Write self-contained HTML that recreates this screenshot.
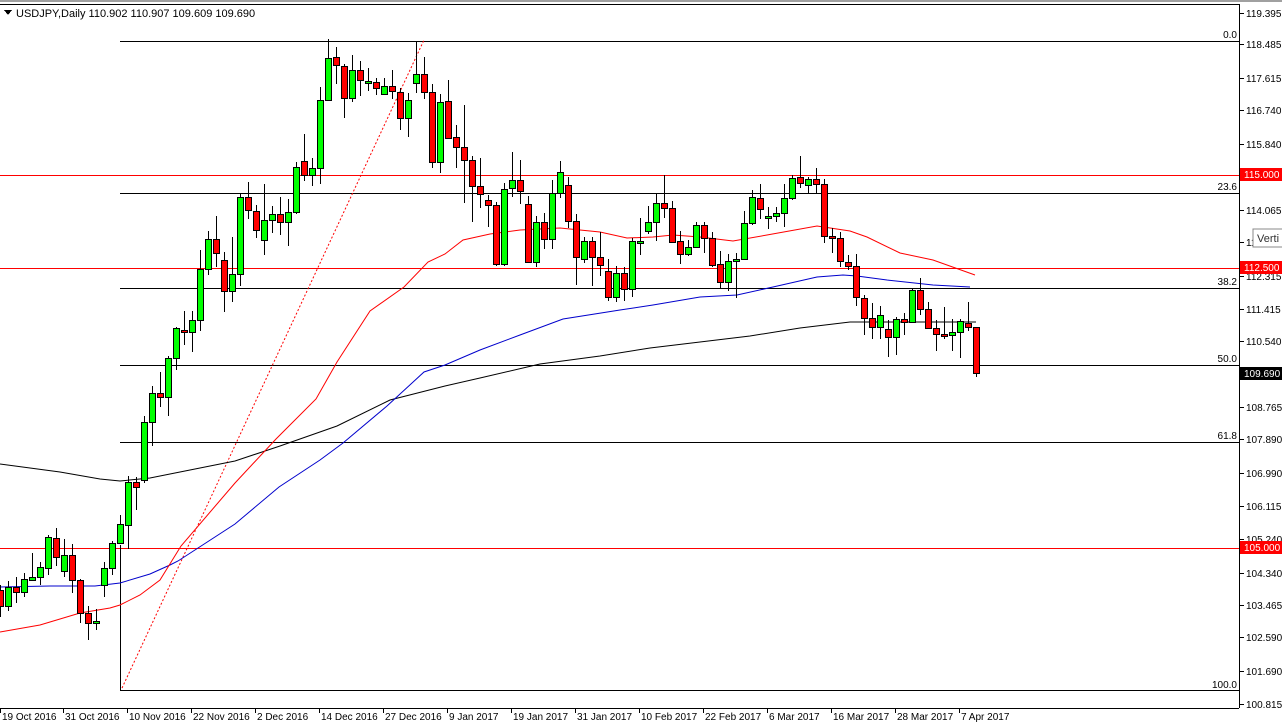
<!DOCTYPE html>
<html><head><meta charset="utf-8"><style>
html,body{margin:0;padding:0;background:#fff;width:1282px;height:728px;overflow:hidden;font-family:"Liberation Sans",sans-serif;}
svg{position:absolute;left:0;top:0}
text{font-family:"Liberation Sans",sans-serif;font-size:10px;fill:#000}
</style></head><body>
<svg id="s" width="1282" height="728" viewBox="0 0 1282 728" shape-rendering="crispEdges">
<rect x="0" y="0" width="1282" height="2" fill="#a0a0a0"/>
<line x1="0" y1="4.5" x2="1239" y2="4.5" stroke="#000"/>
<line x1="1239.5" y1="4" x2="1239.5" y2="708" stroke="#000"/>
<line x1="0" y1="708.5" x2="1239" y2="708.5" stroke="#000"/>
<!-- red horizontals -->
<line x1="0" y1="175.5" x2="1239" y2="175.5" stroke="#f00"/>
<line x1="0" y1="268.5" x2="1239" y2="268.5" stroke="#f00"/>
<line x1="0" y1="548.5" x2="1239" y2="548.5" stroke="#f00"/>
<!-- fib lines -->
<g stroke="#000">
<line x1="120" y1="41.5" x2="1239" y2="41.5"/>
<line x1="120" y1="193.5" x2="1239" y2="193.5"/>
<line x1="120" y1="288.5" x2="1239" y2="288.5"/>
<line x1="120" y1="365.5" x2="1239" y2="365.5"/>
<line x1="120" y1="442.5" x2="1239" y2="442.5"/>
<line x1="120" y1="690.5" x2="1239" y2="690.5"/>
<line x1="120.5" y1="545" x2="120.5" y2="690"/>
</g>
<g text-anchor="end">
<text x="1237" y="38">0.0</text><text x="1237" y="190">23.6</text><text x="1237" y="285">38.2</text>
<text x="1237" y="362">50.0</text><text x="1237" y="439">61.8</text><text x="1237" y="688">100.0</text>
</g>
<line x1="122" y1="688" x2="424" y2="40" stroke="#f00" stroke-dasharray="2,2" shape-rendering="auto"/>
<g fill="none" shape-rendering="auto" stroke-width="1">
<polyline stroke="#000" points="0,464 60,472 100,479 120,481 150,478 190,470 235,461 280,446 337,426 390,400 445,386 480,378 540,364 600,356 650,348 700,342 750,336 800,328 850,322 976,322"/>
<polyline stroke="#00c" points="0,587 50,586 95,586 120,583 150,574 170,565 178,561 235,524 279,487 320,460 343,443 387,406 424,372 445,365 480,350 520,335 563,319 620,310 653,305 700,297 737,295 773,287 817,277 843,275 857,276 887,280 933,285 970,287"/>
<polyline stroke="#f00" points="0,632 40,625 80,613 110,608 120,605 140,595 160,580 181,546 235,483 276,439 316,399 337,362 370,311 404,287 428,262 445,254 463,240 490,234 520,230 560,228 600,232 627,238 653,237 673,235 700,237 733,241 767,235 817,226 850,231 867,237 900,253 933,260 975,275"/>
</g>
<g id="c"></g>
<!-- title -->
<path d="M4 10 L12 10 L8 15 Z" fill="#000"/>
<text x="16" y="17" style="font-size:11px">USDJPY,Daily  110.902 110.907 109.609 109.690</text>
<!-- right axis -->
<g id="ax"></g>
<rect x="1240" y="168" width="42" height="13" fill="#f00"/><text x="1244" y="178" style="fill:#fff">115.000</text>
<rect x="1240" y="261" width="42" height="13" fill="#f00"/><text x="1244" y="271" style="fill:#fff">112.500</text>
<rect x="1240" y="367" width="42" height="13" fill="#000"/><text x="1244" y="377" style="fill:#fff">109.690</text>
<rect x="1240" y="541" width="42" height="13" fill="#f00"/><text x="1244" y="551" style="fill:#fff">105.000</text>
<rect x="1253" y="229" width="32" height="18" fill="#fff" stroke="#888"/><text x="1257" y="242" style="font-size:11px;fill:#333">Verti</text>
<g id="bx"></g>
</svg>
<script>
var d=[
[0,590,606,585,617],[1,587,606,581,611],[0,587,592,577,603],[1,579,592,573,597],[1,577,580,553,581],[1,567,577,562,585],[1,537,568,535,575],[0,538,557,528,566],[1,555,571,539,577],[0,555,580,544,593],
[0,580,613,579,623],[0,613,623,606,640],[1,621,623,609,630],[1,568,585,562,597],[1,543,568,541,575],[1,524,543,515,543],[1,482,525,476,549],[0,482,487,477,510],[1,422,480,416,483],[1,393,422,386,446],
[0,393,397,372,407],[1,358,397,356,416],[1,328,358,327,370],[0,330,332,311,345],[1,320,332,311,352],[1,269,320,250,331],[1,239,269,231,275],[0,239,253,216,267],[0,260,291,252,312],[1,274,291,237,302],
[1,197,274,193,286],[0,197,210,182,219],[0,211,230,205,238],[1,220,240,184,255],[1,214,220,206,233],[0,214,222,197,235],[1,212,222,199,246],[1,167,212,162,214],[0,161,175,134,181],[1,168,175,158,186],
[1,100,168,87,184],[1,58,100,39,101],[0,57,65,47,84],[0,66,98,64,118],[1,70,98,55,102],[0,70,80,61,96],[1,81,82,68,91],[0,82,88,78,95],[1,86,94,78,95],[0,86,91,70,99],
[0,92,118,88,130],[1,100,118,93,137],[1,74,83,41,93],[0,74,92,57,99],[0,92,162,84,168],[1,102,162,94,173],[0,101,138,80,139],[0,137,147,125,168],[0,147,160,105,203],[0,160,186,156,222],
[0,186,194,158,208],[0,200,205,195,227],[0,205,264,202,266],[1,189,264,183,266],[1,180,188,152,197],[0,180,191,160,204],[0,204,262,196,263],[1,222,262,216,267],[0,222,239,213,249],[1,193,239,180,249],
[1,172,193,161,198],[0,185,221,177,228],[0,221,257,214,285],[1,241,259,237,263],[0,241,257,237,286],[0,257,265,232,276],[0,271,297,259,301],[1,273,297,266,302],[0,273,289,267,301],[1,241,289,238,297],
[1,241,242,218,255],[1,222,231,206,234],[1,203,222,193,241],[0,203,208,175,218],[0,208,242,201,243],[0,241,254,231,264],[1,247,254,240,256],[1,225,247,222,248],[0,225,238,222,253],[0,238,265,232,267],
[0,264,282,251,289],[1,261,282,254,291],[1,259,261,253,298],[1,223,259,211,259],[1,197,223,190,225],[0,198,209,184,219],[1,216,218,207,229],[1,213,216,207,222],[1,198,213,184,227],[1,178,198,175,200],
[0,177,183,156,188],[1,179,185,177,194],[0,179,184,168,193],[0,184,236,179,243],[0,236,238,228,253],[0,238,261,232,267],[0,262,266,255,270],[0,266,297,254,306],[0,298,318,295,335],[0,318,327,303,339],
[1,315,327,306,339],[0,329,337,320,357],[1,319,337,317,355],[0,319,322,313,335],[1,290,322,288,323],[0,290,309,278,315],[0,309,328,302,328],[0,328,334,320,351],[0,334,336,307,339],[1,332,335,319,351],
[1,321,332,319,358],[0,323,327,302,331],[0,327,373,327,377]];
var h='';
d.forEach(function(c,i){var x=8*i;
h+='<line x1="'+(x+0.5)+'" y1="'+c[3]+'" x2="'+(x+0.5)+'" y2="'+c[4]+'" stroke="#000"/>';
var t=c[1],b=c[2];if(b-t<2){b=t+2;}
h+='<rect x="'+(x-2.5)+'" y="'+(t+0.5)+'" width="6" height="'+(b-t)+'" fill="'+(c[0]?'#00ff00':'#ff0000')+'" stroke="#000"/>';});
document.getElementById('c').innerHTML=h;
var L=[[119.395,13],[118.485,44],[117.615,78],[116.740,110],[115.840,144],[114.065,210],[113.190,242],[112.315,276],[111.415,309],[110.540,341],[108.765,407],[107.890,439],[106.990,473],[106.115,506],[105.240,539],[104.340,573],[103.465,605],[102.590,637],[101.690,671],[100.815,704]];
var a='';L.forEach(function(l){a+='<line x1="1240" y1="'+(l[1]+0.5)+'" x2="1244" y2="'+(l[1]+0.5)+'" stroke="#000"/><text x="1246" y="'+(l[1]+4)+'">'+l[0].toFixed(3)+'</text>';});
document.getElementById('ax').innerHTML=a;
var B=[["19 Oct 2016",0],["31 Oct 2016",63],["10 Nov 2016",127],["22 Nov 2016",191],["2 Dec 2016",255],["14 Dec 2016",319],["27 Dec 2016",383],["9 Jan 2017",447],["19 Jan 2017",511],["31 Jan 2017",575],["10 Feb 2017",639],["22 Feb 2017",703],["6 Mar 2017",767],["16 Mar 2017",831],["28 Mar 2017",895],["7 Apr 2017",959]];
var bb='';B.forEach(function(l){bb+='<line x1="'+(l[1]+0.5)+'" y1="709" x2="'+(l[1]+0.5)+'" y2="713" stroke="#000"/><text x="'+(l[1]+2)+'" y="720">'+l[0]+'</text>';});
document.getElementById('bx').innerHTML=bb;
</script>
</body></html>
